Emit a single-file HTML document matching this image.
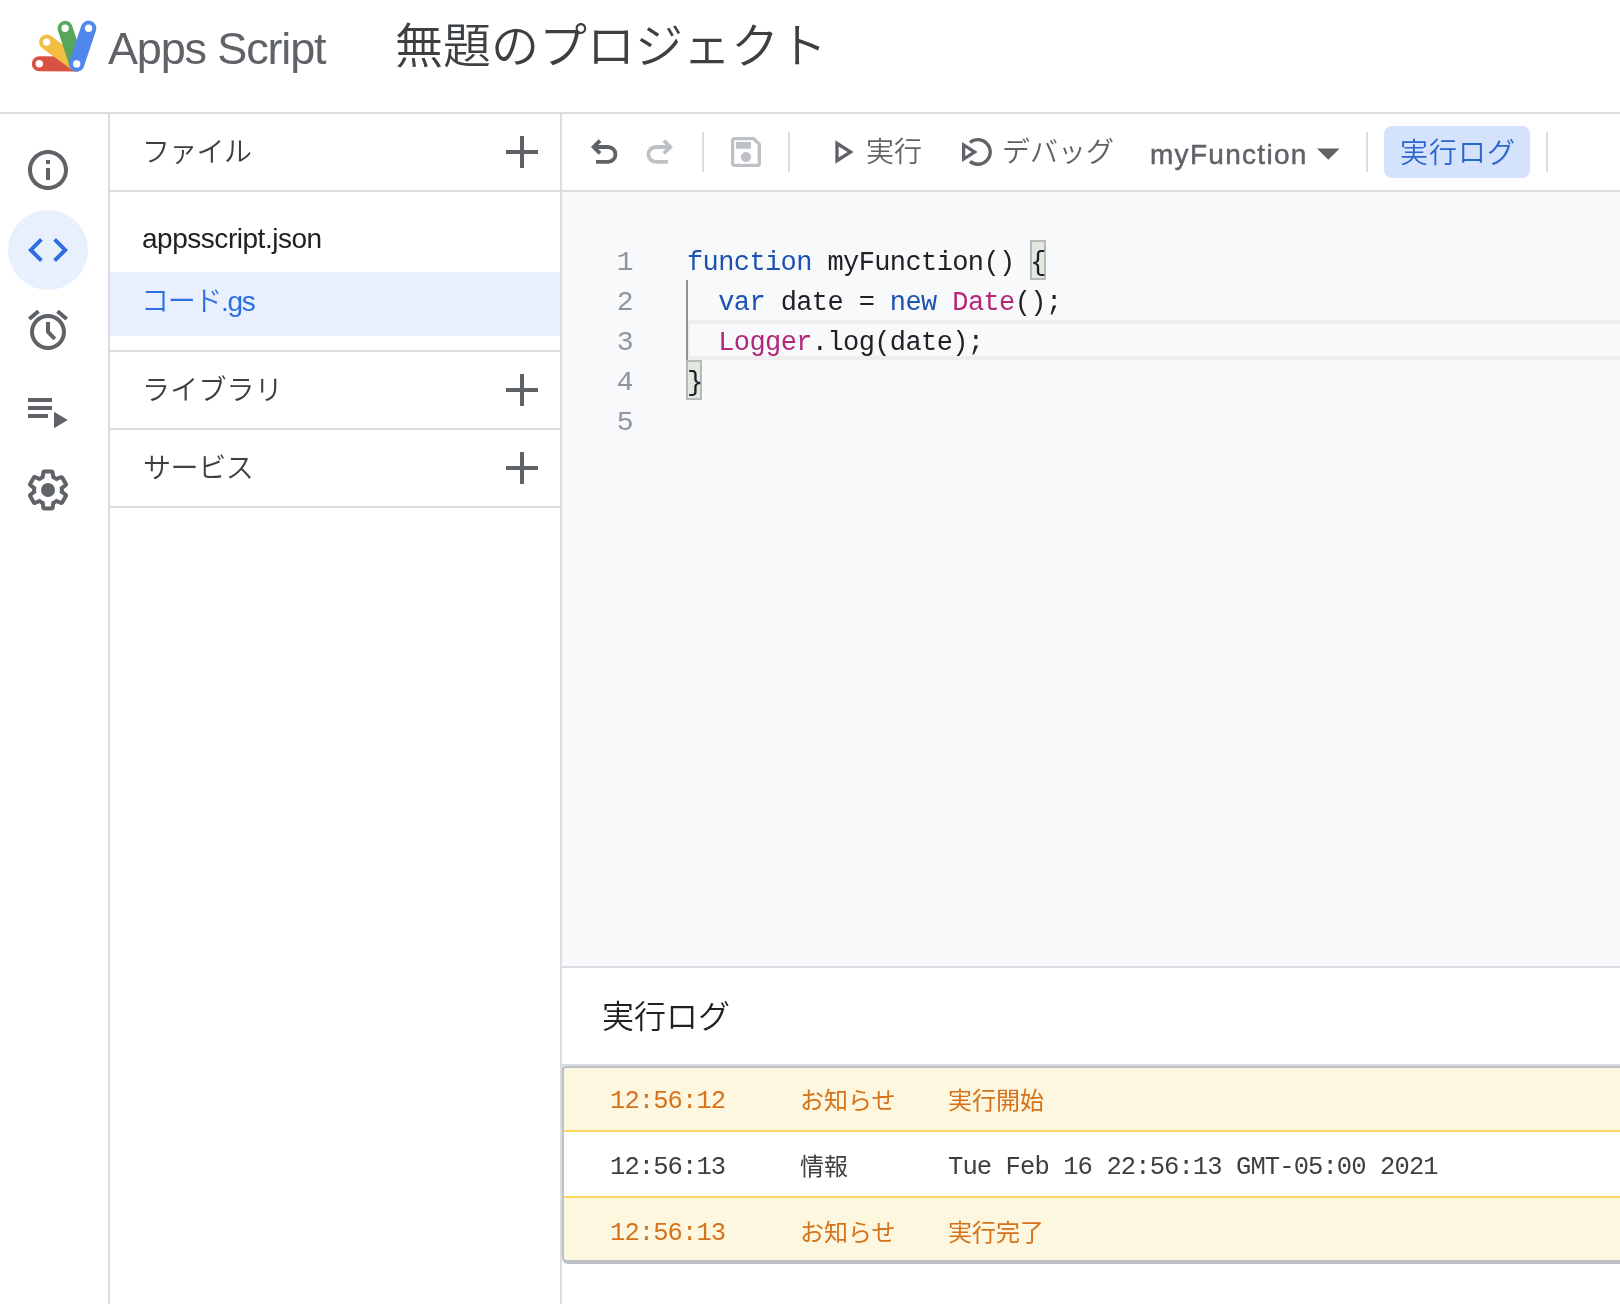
<!DOCTYPE html>
<html lang="ja">
<head>
<meta charset="utf-8">
<title>無題のプロジェクト - Apps Script</title>
<style>
*{box-sizing:border-box;margin:0;padding:0}
html,body{width:1620px;height:1304px;overflow:hidden;background:#fff}
body{position:relative;font-family:"Liberation Sans","Noto Sans CJK JP",sans-serif;color:#3c4043}
#app{position:absolute;left:0;top:0;width:1620px;height:1304px;will-change:transform}
.abs{position:absolute}
.hl{position:absolute;height:2px;background:#dadce0}
.vl{position:absolute;width:2px;background:#dadce0}
.t{position:absolute;white-space:nowrap;line-height:1}
.mono{font-family:"Liberation Mono","Noto Sans CJK JP",monospace}
svg{position:absolute;overflow:visible}

.plus{width:32px;height:32px}
.plus:before,.plus:after{content:"";position:absolute;background:#5f6368}
.plus:before{left:0;top:14px;width:32px;height:4px}
.plus:after{left:14px;top:0;width:4px;height:32px}

.code{font-size:27px;letter-spacing:-0.6px;line-height:40px;color:#202124}
.code .ln{display:inline-block;width:71.5px;margin-right:53.5px;text-align:right;color:#8f959b;font-size:28px;letter-spacing:0}
.code .k{color:#1c52b2}
.code .c{color:#b3267a}

.row{position:absolute;left:0;width:1080px;font-size:24px;white-space:nowrap}
.row.n{background:#fef7e0;color:#d5721a}
.row.i{background:#fff;color:#3c4043}
.row span{position:absolute;top:21px;line-height:1}
.row.i span{top:22.5px}
.row.r3 span{top:23px}
.row .tm{left:46px}
.row .lv{left:236px}
.row .msg{left:384px}
.row .mono{font-size:25.5px;letter-spacing:-0.9px;margin-top:-0.5px}
.row.i .mono{margin-top:0.5px}
</style>
</head>
<body>
<div id="app">

<!-- ===== header ===== -->
<svg id="logo" style="left:0;top:0" width="110" height="90" viewBox="0 0 110 90">
  <g fill="none" stroke-linecap="round" stroke-width="15">
    <line x1="39.3" y1="63.8" x2="76.7" y2="63.9" stroke="#d95140"/>
    <line x1="46.6" y1="42.1" x2="76.7" y2="63.9" stroke="#f2bd42"/>
    <line x1="65.1" y1="28.3" x2="76.7" y2="63.9" stroke="#58a65c"/>
    <line x1="88.6" y1="28.3" x2="76.7" y2="63.9" stroke="#5087ec" stroke-width="15.4"/>
  </g>
  <g fill="#fff">
    <circle cx="39.3" cy="63.8" r="3.7"/>
    <circle cx="46.6" cy="42.1" r="3.7"/>
    <circle cx="65.1" cy="28.3" r="3.7"/>
    <circle cx="88.6" cy="28.3" r="3.7"/>
    <circle cx="76.7" cy="63.9" r="3.7"/>
  </g>
</svg>
<div class="t" id="brand" style="left:108px;top:26px;font-size:45px;color:#5f6368;letter-spacing:-1.15px">Apps Script</div>
<div class="t" id="title" style="left:395px;top:23px;font-size:48px;font-weight:350;color:#3c4043">無題のプロジェクト</div>

<div class="hl" style="left:0;top:112px;width:1620px"></div>
<div class="vl" style="left:108px;top:112px;height:1192px"></div>
<div class="vl" style="left:560px;top:112px;height:1192px"></div>


<!-- ===== icon rail ===== -->
<div class="abs" style="left:8px;top:210px;width:80px;height:80px;border-radius:50%;background:#e8f0fe"></div>
<svg style="left:24px;top:146px" width="48" height="48" viewBox="0 0 24 24" fill="#5f6368"><path d="M11 17h2v-6h-2v6zm1-15C6.48 2 2 6.48 2 12s4.48 10 10 10 10-4.48 10-10S17.52 2 12 2zm0 18c-4.41 0-8-3.59-8-8s3.59-8 8-8 8 3.59 8 8-3.59 8-8 8zM11 9h2V7h-2v2z"/></svg>
<svg style="left:24px;top:226px" width="48" height="48" viewBox="0 0 24 24" fill="#2e6ee0"><path d="M9.4 16.6L4.8 12l4.6-4.6L8 6l-6 6 6 6 1.4-1.4zm5.2 0l4.6-4.6-4.6-4.6L16 6l6 6-6 6-1.4-1.4z"/></svg>
<svg style="left:24px;top:306px" width="48" height="48" viewBox="0 0 24 24" fill="#5f6368"><path d="M22 5.72l-4.6-3.86-1.29 1.53 4.6 3.86L22 5.72zM7.88 3.39L6.6 1.86 2 5.71l1.29 1.53 4.59-3.85zM12 4c-4.97 0-9 4.03-9 9s4.02 9 9 9c4.97 0 9-4.03 9-9s-4.03-9-9-9zm0 16c-3.87 0-7-3.13-7-7s3.13-7 7-7 7 3.13 7 7-3.13 7-7 7z"/><path d="M12 8V13L15.4 16.4" fill="none" stroke="#5f6368" stroke-width="2"/></svg>
<svg style="left:0;top:0" width="110" height="600" viewBox="0 0 110 600" fill="#5f6368">
  <rect x="28" y="398" width="24" height="4"/>
  <rect x="28" y="406" width="24" height="4"/>
  <rect x="28" y="414" width="20" height="4"/>
  <path d="M54 411.8V428.2L67.8 420z"/>
</svg>
<svg style="left:24px;top:466px" width="48" height="48" viewBox="0 0 24 24" fill="#5f6368"><path d="M13.85 22.25h-3.7c-.74 0-1.36-.54-1.45-1.27l-.27-1.89c-.27-.14-.53-.29-.79-.46l-1.8.72c-.7.26-1.47-.03-1.81-.65L2.2 15.53c-.35-.66-.2-1.44.36-1.88l1.53-1.19c-.01-.15-.02-.3-.02-.46 0-.15.01-.31.02-.46l-1.52-1.19c-.59-.45-.74-1.26-.37-1.88l1.85-3.19c.34-.62 1.11-.9 1.79-.63l1.81.73c.26-.17.52-.32.78-.46l.27-1.91c.09-.7.71-1.25 1.44-1.25h3.7c.74 0 1.36.54 1.45 1.27l.27 1.89c.27.14.53.29.79.46l1.8-.72c.71-.26 1.48.03 1.82.65l1.84 3.18c.36.66.2 1.44-.36 1.88l-1.53 1.19c.01.15.02.3.02.46s-.01.31-.02.46l1.52 1.19c.56.45.72 1.23.37 1.86l-1.86 3.22c-.34.62-1.11.9-1.8.63l-1.8-.72c-.26.17-.52.32-.78.46l-.27 1.91c-.1.68-.72 1.22-1.46 1.22zm-3.23-2h2.76l.37-2.55.53-.22c.44-.18.88-.44 1.34-.78l.45-.34 2.38.96 1.38-2.4-2.03-1.58.07-.56c.03-.26.06-.51.06-.78s-.03-.53-.06-.78l-.07-.56 2.03-1.58-1.39-2.4-2.39.96-.45-.35c-.42-.32-.87-.58-1.33-.77l-.52-.22-.37-2.55h-2.76l-.37 2.55-.53.21c-.44.19-.88.44-1.34.79l-.45.33-2.38-.95-1.39 2.39 2.03 1.58-.07.56a7 7 0 0 0-.06.79c0 .26.02.53.06.78l.07.56-2.03 1.58 1.38 2.4 2.39-.96.45.35c.43.33.86.58 1.33.77l.53.22.38 2.55z"/><circle cx="12" cy="12" r="3.5"/></svg>

<!-- ===== file panel ===== -->
<div class="t" style="left:142px;top:139px;font-size:28px;font-weight:350;color:#3c4043;letter-spacing:-0.7px">ファイル</div>
<div class="abs plus" style="left:506px;top:136px"></div>
<div class="hl" style="left:110px;top:190px;width:450px"></div>
<div class="t" style="left:142px;top:225px;font-size:28px;color:#202124;letter-spacing:-0.47px">appsscript.json</div>
<div class="abs" style="left:110px;top:272px;width:450px;height:64px;background:#e8f0fe"></div>
<div class="t" style="left:141px;top:288px;font-size:28px;color:#2e6ee0;font-weight:350;letter-spacing:-1.3px">コード.gs</div>
<div class="hl" style="left:110px;top:350px;width:450px"></div>
<div class="t" style="left:142px;top:377px;font-size:28px;font-weight:350;color:#3c4043;letter-spacing:0.2px">ライブラリ</div>
<div class="abs plus" style="left:506px;top:374px"></div>
<div class="hl" style="left:110px;top:428px;width:450px"></div>
<div class="t" style="left:143px;top:455px;font-size:28px;font-weight:350;color:#3c4043;letter-spacing:-0.4px">サービス</div>
<div class="abs plus" style="left:506px;top:452px"></div>
<div class="hl" style="left:110px;top:506px;width:450px"></div>


<!-- ===== toolbar ===== -->
<svg style="left:560px;top:112px" width="1060" height="80" viewBox="560 112 1060 80" fill="none">
  <g stroke="#5f6368" stroke-width="3.8">
    <path d="M596 161.9H608a7.45 7.45 0 0 0 0-14.9H594"/>
    <path d="M600.05 140.55L593.6 147l6.45 6.45"/>
  </g>
  <g stroke="#bdc1c6" stroke-width="3.8">
    <path d="M667.9 161.9H655.85a7.45 7.45 0 0 1 0-14.9H670"/>
    <path d="M663.85 140.55L670.3 147l-6.45 6.45"/>
  </g>
  <g fill="#dadce0">
    <rect x="702" y="132" width="2" height="40"/>
    <rect x="788" y="132" width="2" height="40"/>
    <rect x="1366" y="132" width="2" height="40"/>
    <rect x="1546" y="132" width="2" height="40"/>
  </g>
  <g transform="translate(726 132) scale(1.6667)" fill="#bdc1c6"><path d="M17 3H5c-1.11 0-2 .9-2 2v14c0 1.1.89 2 2 2h14c1.1 0 2-.9 2-2V7l-4-4zm2 16H5V5h11.17L19 7.83V19zm-7-7c-1.66 0-3 1.34-3 3s1.34 3 3 3 3-1.34 3-3-1.34-3-3-3zM6 6h9v4H6z"/></g>
  <g transform="translate(822 132) scale(1.6667)" fill="#5f6368"><path d="M10 8.64L15.27 12 10 15.36V8.64M8 5v14l11-7L8 5z"/></g>
  <path d="M970.04 142.53A12.3 12.3 0 1 1 970.04 161.37" stroke="#5f6368" stroke-width="3.3"/>
  <path d="M962 142V162L977.6 152zM965.2 147.85L971.67 152 965.2 156.15z" fill="#5f6368" fill-rule="evenodd"/>
  <path d="M1317 148.5h22.6l-11.3 11.3z" fill="#5f6368"/>
  <rect x="1384" y="126" width="146" height="52" rx="8" fill="#d5e2fb"/>
</svg>
<div class="t" style="left:866px;top:139px;font-size:28px;font-weight:350;color:#5f6368">実行</div>
<div class="t" style="left:1002px;top:139px;font-size:28px;font-weight:350;color:#5f6368">デバッグ</div>
<div class="t" style="left:1150px;top:141px;font-size:28px;color:#5f6368;letter-spacing:1.3px;-webkit-text-stroke:0.5px #5f6368">myFunction</div>
<div class="t" style="left:1400px;top:139.5px;font-size:28px;font-weight:350;color:#2b66cd;letter-spacing:1px">実行ログ</div>
<div class="hl" style="left:562px;top:190px;width:1058px"></div>

<!-- ===== editor ===== -->
<div class="abs" style="left:562px;top:192px;width:1058px;height:774px;background:#f8f9fa"></div>
<div class="abs" style="left:688px;top:320px;width:940px;height:40px;border:4px solid #eeeeee;border-left-width:2px"></div>
<div class="abs" style="left:686px;top:280px;width:2px;height:80px;background:#939393"></div>
<div class="abs" style="left:1030px;top:240px;width:16px;height:40px;background:#e0e8e0;border:2px solid #b9b9b9"></div>
<div class="abs" style="left:686px;top:360px;width:16px;height:40px;background:#e0e8e0;border:2px solid #b9b9b9"></div>
<pre class="abs mono code" style="left:562px;top:243px"><span class="ln">1</span><span class="k">function</span> myFunction() {
<span class="ln">2</span>  <span class="k">var</span> date = <span class="k">new</span> <span class="c">Date</span>();
<span class="ln">3</span>  <span class="c">Logger</span>.log(date);
<span class="ln">4</span>}
<span class="ln">5</span></pre>
<div class="hl" style="left:562px;top:966px;width:1058px"></div>


<!-- ===== execution log ===== -->
<div class="t" style="left:602px;top:1001px;font-size:32px;font-weight:350;color:#202124">実行ログ</div>
<div class="hl" style="left:562px;top:1064px;width:1058px"></div>
<div class="abs" style="left:562px;top:1066px;width:1080px;height:198px;background:#bdc1c6;border-radius:3px 0 0 6px"></div>
<div class="abs" id="logbox" style="left:564px;top:1068px;width:1078px;height:192px;border-radius:3px 0 0 3.5px;background:#fff;overflow:hidden">
  <div class="row n" style="top:0;height:62px"><span class="mono tm">12:56:12</span><span class="lv">お知らせ</span><span class="msg">実行開始</span></div>
  <div class="abs" style="left:0;top:62px;width:1080px;height:2px;background:#fdd663"></div>
  <div class="row i" style="top:64px;height:64px"><span class="mono tm">12:56:13</span><span class="lv">情報</span><span class="mono msg">Tue Feb 16 22:56:13 GMT-05:00 2021</span></div>
  <div class="abs" style="left:0;top:128px;width:1080px;height:2px;background:#fdd663"></div>
  <div class="row n r3" style="top:130px;height:62px"><span class="mono tm">12:56:13</span><span class="lv">お知らせ</span><span class="msg">実行完了</span></div>
</div>

</div>
</body>
</html>
